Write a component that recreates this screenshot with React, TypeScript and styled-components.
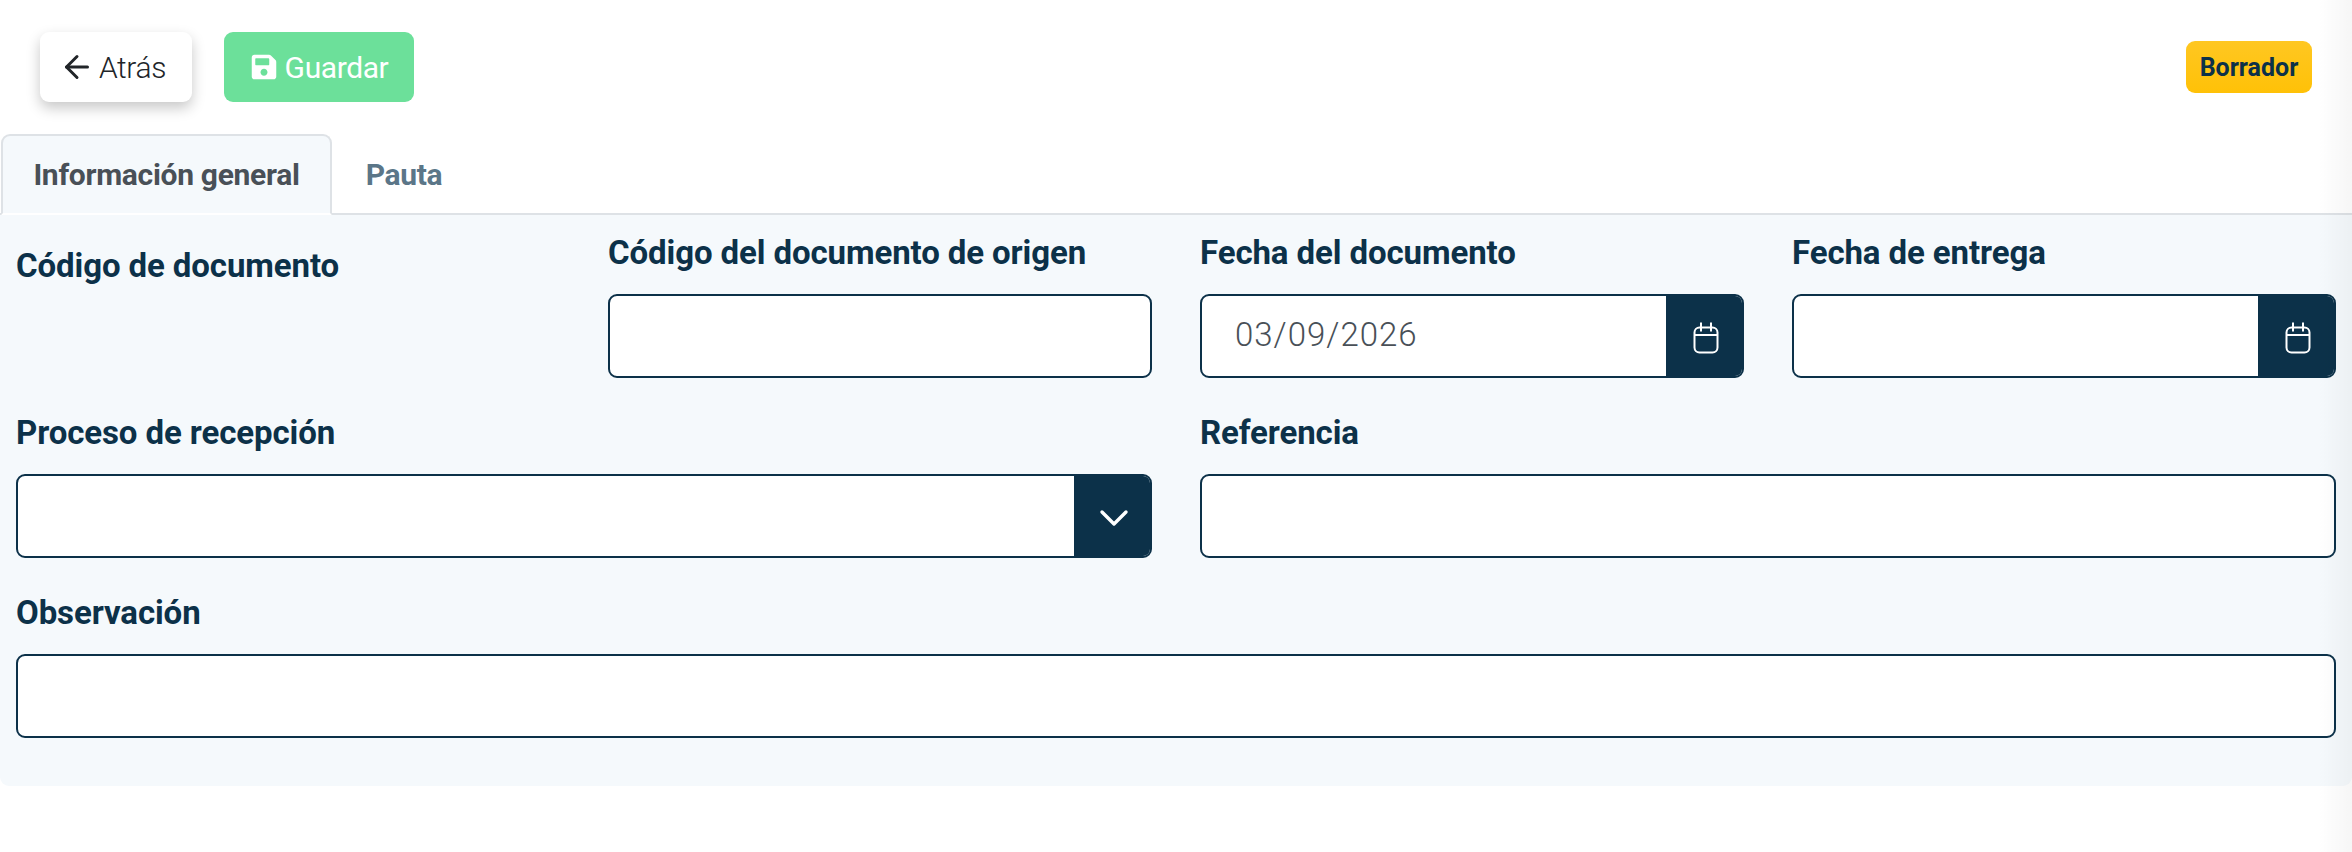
import React from "react";
import styled, { createGlobalStyle } from "styled-components";
import { ArrowLeft, ChevronDown } from "lucide-react";
import { FaSave } from "react-icons/fa";

const GlobalStyle = createGlobalStyle`
  html, body {
    margin: 0;
    background: #fff;
  }
  body {
    font-family: "Roboto", "Liberation Sans", sans-serif;
    color: #0c3149;
  }
  * {
    box-sizing: border-box;
  }
`;

const Page = styled.div`
  position: relative;
  width: 2352px;
  min-height: 852px;
  overflow: hidden;

  /* soft shade that falls along the right edge of the window */
  &::after {
    content: "";
    position: absolute;
    top: 0;
    right: 0;
    bottom: 0;
    width: 34px;
    background: linear-gradient(to right, rgba(0, 0, 0, 0), rgba(0, 0, 0, 0.035));
    pointer-events: none;
  }
`;

const Toolbar = styled.div`
  display: flex;
  align-items: center;
  height: 134px;
  padding: 0 40px;
  gap: 32px;
`;

const Button = styled.button<{ $save?: boolean }>`
  display: flex;
  align-items: center;
  justify-content: center;
  gap: ${(p) => (p.$save ? "7px" : "4px")};
  height: 70px;
  width: ${(p) => (p.$save ? "190px" : "152px")};
  padding: 0 ${(p) => (p.$save ? "0" : "7px")} 0 0;
  border: 0;
  border-radius: 9px;
  font-family: inherit;
  font-size: 30px;
  font-weight: ${(p) => (p.$save ? 400 : 300)};
  letter-spacing: -0.4px;
  background: ${(p) => (p.$save ? "#6ce09a" : "#fff")};
  color: ${(p) => (p.$save ? "#fff" : "#212529")};
  box-shadow: ${(p) => (p.$save ? "none" : "0 6px 14px rgba(0, 0, 0, 0.22)")};
`;

const Badge = styled.span`
  display: flex;
  align-items: center;
  justify-content: center;
  margin-left: auto;
  width: 126px;
  height: 52px;
  border-radius: 9px;
  background: linear-gradient(#ffc721, #ffc107);
  font-size: 25px;
  font-weight: 700;
  color: #0c3149;
`;

const Tabs = styled.div`
  display: flex;
  height: 81px;
  padding-left: 1px;
  border-bottom: 2px solid #dee2e6;
`;

const Tab = styled.div<{ $active?: boolean }>`
  display: flex;
  align-items: center;
  justify-content: center;
  height: 81px;
  width: ${(p) => (p.$active ? "331px" : "144px")};
  border: 2px solid ${(p) => (p.$active ? "#dee2e6" : "transparent")};
  border-bottom: 2px solid ${(p) => (p.$active ? "#fff" : "transparent")};
  border-radius: 9px 9px 0 0;
  background: ${(p) => (p.$active ? "#f5f9fc" : "transparent")};
  color: ${(p) => (p.$active ? "#495057" : "#5b7688")};
  font-size: 30px;
  font-weight: 700;
  letter-spacing: -0.3px;
`;

const Panel = styled.div`
  display: grid;
  grid-template-columns: repeat(4, 544px);
  column-gap: 48px;
  row-gap: 17px;
  width: 2352px;
  padding: 0 16px 48px;
  background: #f5f9fc;
  border-radius: 0 0 9px 9px;
`;

const Field = styled.div<{ $span?: number }>`
  grid-column: span ${(p) => p.$span ?? 1};
  padding-top: 14px;
`;

const Label = styled.label<{ $low?: boolean }>`
  display: block;
  height: 48px;
  margin-top: ${(p) => (p.$low ? "13px" : "0")};
  margin-bottom: 17px;
  font-size: 33px;
  line-height: 48px;
  font-weight: 700;
  letter-spacing: -0.1px;
  color: #0c3149;
`;

const InputWrap = styled.div`
  display: flex;
  height: 84px;
  border: 2px solid #0c3149;
  border-radius: 9px;
  background: #fff;
  overflow: hidden;
`;

const Value = styled.span`
  flex: 1;
  padding-left: 33px;
  font-size: 33px;
  line-height: 78px;
  font-weight: 300;
  letter-spacing: 1px;
  color: #495057;
`;

const Addon = styled.span`
  display: flex;
  align-items: center;
  justify-content: center;
  width: 76px;
  padding: 3px 0 0 3px;
  background: #0c3149;
  color: #fff;
`;

const CalendarIcon = () => (
  <svg width="26" height="32" viewBox="0 0 26 32" fill="none" stroke="currentColor" strokeWidth="2">
    <rect x="1.5" y="5.5" width="23" height="25" rx="5" />
    <path d="M1.5 13h23M8 0.5v9M18 0.5v9" />
  </svg>
);

const DateField = ({ label, value }: { label: string; value?: string }) => (
  <Field>
    <Label>{label}</Label>
    <InputWrap>
      <Value>{value}</Value>
      <Addon>
        <CalendarIcon />
      </Addon>
    </InputWrap>
  </Field>
);

const App = () => {
  return (
    <Page>
      <GlobalStyle />
      <Toolbar>
        <Button>
          <ArrowLeft size={36} strokeWidth={2} />
          Atrás
        </Button>
        <Button $save>
          <FaSave size={28} />
          Guardar
        </Button>
        <Badge>Borrador</Badge>
      </Toolbar>
      <Tabs>
        <Tab $active>Información general</Tab>
        <Tab>Pauta</Tab>
      </Tabs>
      <Panel>
        <Field>
          <Label $low>Código de documento</Label>
        </Field>
        <Field>
          <Label>Código del documento de origen</Label>
          <InputWrap />
        </Field>
        <DateField label="Fecha del documento" value="03/09/2026" />
        <DateField label="Fecha de entrega" />
        <Field $span={2}>
          <Label>Proceso de recepción</Label>
          <InputWrap>
            <Value />
            <Addon>
              <ChevronDown size={48} strokeWidth={1.7} />
            </Addon>
          </InputWrap>
        </Field>
        <Field $span={2}>
          <Label>Referencia</Label>
          <InputWrap />
        </Field>
        <Field $span={4}>
          <Label>Observación</Label>
          <InputWrap />
        </Field>
      </Panel>
    </Page>
  );
};

export default App;
